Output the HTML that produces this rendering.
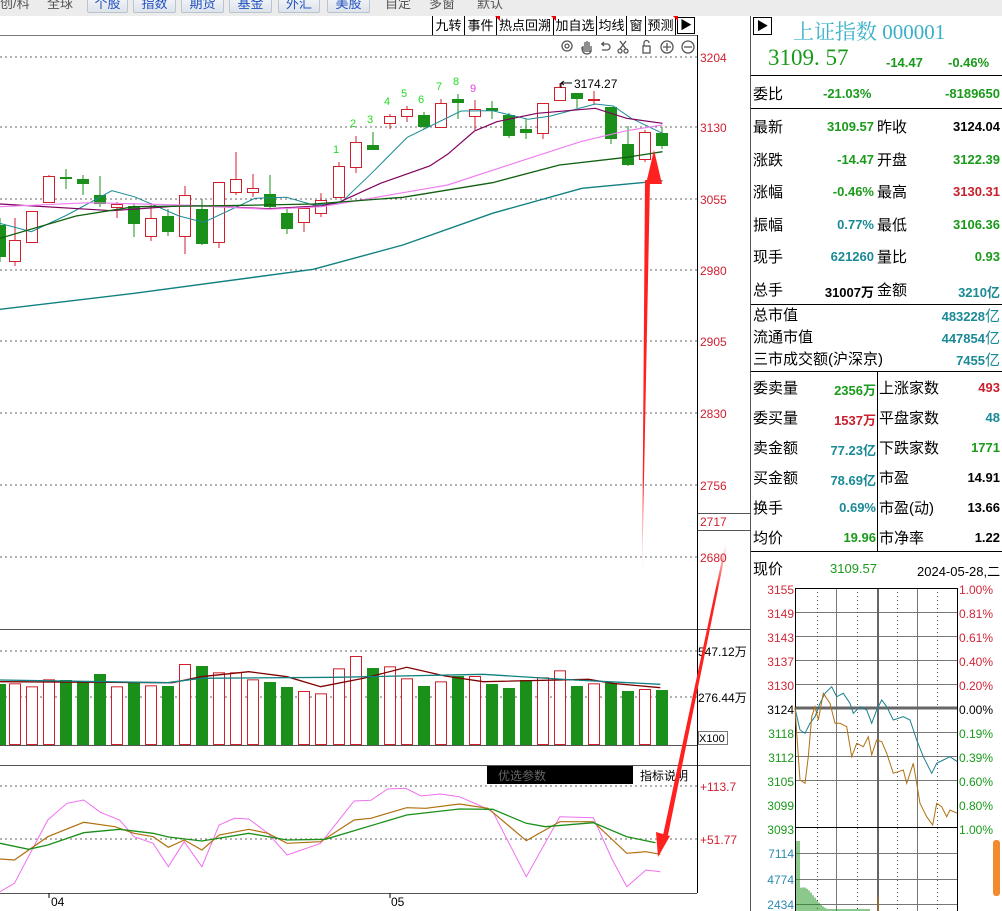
<!DOCTYPE html>
<html><head><meta charset="utf-8"><style>
*{margin:0;padding:0;box-sizing:border-box}
body{width:1002px;height:911px;overflow:hidden;background:#fff;font-family:"Liberation Sans","Noto Sans CJK SC",sans-serif;position:relative}
.a{position:absolute;white-space:nowrap}
.tb{position:absolute;top:0;left:0;width:1002px;height:16px;background:#ececec}
.btn{position:absolute;top:-4px;height:17px;border:1px solid #b8c4d0;border-radius:2px;background:linear-gradient(#f4f6f8,#dde3ea);color:#2050c0;font-size:13px;line-height:14px;text-align:center}
.gt{position:absolute;top:-4px;color:#555;font-size:13px;line-height:16px}
.t2{position:absolute;top:16px;height:19px;border:1px solid #000;border-top:none;border-bottom:none;border-left:none;font-size:13px;line-height:19px;text-align:center;color:#000}
.lbl{font-size:15px;color:#000}
.g{color:#1a9a1a}.r{color:#c8202c}.c{color:#1a8a96}.k{color:#000}
.v{font-size:13px;font-weight:bold;text-align:right}
</style></head><body>
<div class="tb"></div>
<div class="gt" style="left:0">创/科</div>
<div class="gt" style="left:47px">全球</div>
<div class="btn" style="left:87px;width:41px">个股</div>
<div class="btn" style="left:133px;width:43px">指数</div>
<div class="btn" style="left:181px;width:43px">期货</div>
<div class="btn" style="left:229px;width:43px">基金</div>
<div class="btn" style="left:278px;width:42px">外汇</div>
<div class="btn" style="left:327px;width:43px">美股</div>
<div class="gt" style="left:385px">自定</div>
<div class="gt" style="left:429px">多窗</div>
<div class="gt" style="left:477px">默认</div>

<div class="a" style="left:0;top:35px;width:697px;height:1px;background:#777"></div>
<div class="t2" style="left:432px;width:33px;border-left:1px solid #000">九转</div>
<div class="t2" style="left:465px;width:32px">事件</div>
<div class="t2" style="left:497px;width:57px">热点回溯</div>
<div class="t2" style="left:554px;width:43px">加自选</div>
<div class="t2" style="left:597px;width:30px">均线</div>
<div class="t2" style="left:627px;width:19px">窗</div>
<div class="t2" style="left:646px;width:30px">预测</div>
<div class="a" style="left:677px;top:17px;width:18px;height:17px;border:1px solid #000;font-size:12px;line-height:15px;text-align:center">&#9654;</div>
<div class="a" style="left:495px;top:16px;width:0;height:0;border-top:5px solid #e00;border-left:5px solid transparent"></div>
<div class="a" style="left:551px;top:16px;width:0;height:0;border-top:5px solid #e00;border-left:5px solid transparent"></div>
<div class="a" style="left:673px;top:16px;width:0;height:0;border-top:5px solid #e00;border-left:5px solid transparent"></div>

<svg class="a" style="left:0;top:0" width="1002" height="911" id="s">
<g stroke="#555" fill="none" stroke-width="1.3">
<circle cx="567" cy="46" r="5"/><circle cx="567" cy="46" r="2"/>
<path d="M583 52v-6m2 6v-10m2 10v-11m2 11v-10m2 10v-6M582 47c0 5 2 7 5 7s4-2 4-5"/>
<path d="M601 44h6a3 3 0 010 6h-5m0-6l2-2m-2 2l2 2"/>
<path d="M620 41l6 8m0-8l-6 8"/><circle cx="620" cy="51" r="2"/><circle cx="626" cy="51" r="2"/>
<rect x="643" y="46" width="7" height="7"/><path d="M644 46v-3a2.5 2.5 0 015 0"/>
<circle cx="667" cy="47" r="6"/><path d="M663 47h8m-4-4v8"/>
<circle cx="688" cy="47" r="6"/><path d="M684 47h8"/>
</g>
<g stroke="#666" stroke-dasharray="2,3" stroke-width="1">
<path d="M0 57H697M0 127H697M0 199H697M0 270H697M0 341H697M0 413H697M0 485H697M0 557H697"/>
<path d="M0 651H697M0 697H697M0 786H697M0 839H697"/>
</g>
<path d="M697.5 35V893M0 629.5H750M0 745.5H697M0 765.5H750M0 893.5H697M697 513.5H750M697 530.5H750M750.5 16V911" stroke="#555" stroke-width="1" fill="none"/>
<path d="M697.5 35V893" stroke="#000"/>
<path d="M49 893v5M390 893v5" stroke="#000"/>
<g id="cd"></g>
<g font-size="12" fill="#d02030" font-family="Liberation Sans,sans-serif">
<text x="700" y="62">3204</text><text x="700" y="132">3130</text><text x="700" y="204">3055</text><text x="700" y="275">2980</text><text x="700" y="346">2905</text><text x="700" y="418">2830</text><text x="700" y="490">2756</text><text x="700" y="526">2717</text><text x="700" y="562">2680</text>
<text x="700" y="791">+113.7</text><text x="700" y="844">+51.77</text>
</g>
<g font-size="12" fill="#000" font-family="Liberation Sans,Noto Sans CJK SC,sans-serif">
<text x="698" y="656">547.12万</text><text x="698" y="702">276.44万</text>
<text x="51" y="906">04</text><text x="391" y="906">05</text>
<text x="574" y="88">3174.27</text>
</g>
<path d="M572 83h-11m0 0l3-2m-3 2l3 2M561 83v5" stroke="#000" fill="none"/>
<rect x="698.5" y="731.5" width="29" height="13" fill="#fff" stroke="#777"/>
<text x="699" y="742" font-size="11" font-family="Liberation Sans">X100</text>
<rect x="487" y="766" width="146" height="18" fill="#000"/>
<text x="498" y="780" font-size="12" fill="#666" font-family="Liberation Sans,Noto Sans CJK SC,sans-serif">优选参数</text>
<text x="640" y="780" font-size="12" fill="#000" font-family="Liberation Sans,Noto Sans CJK SC,sans-serif">指标说明</text>
<g font-size="11" fill="#22dd22" font-family="Liberation Sans">
<text x="333" y="153">1</text><text x="350" y="127">2</text><text x="367" y="123">3</text><text x="384" y="105">4</text><text x="401" y="97">5</text><text x="418" y="103">6</text><text x="436" y="90">7</text><text x="453" y="85">8</text>
<text x="470" y="92" fill="#e040e0">9</text></g>

<g stroke="#777" stroke-width="1">
<path d="M795 612.5H957M795 636.5H957M795 660.5H957M795 684.5H957M795 732.5H957M795 756.5H957M795 780.5H957M795 853.5H957M795 879.5H957M795 904.5H957"/>
<path d="M836.5 588V911M917.5 588V911"/>
</g>
<path d="M817.5 588V911M857.5 588V911M897.5 588V911M937.5 588V911" stroke="#444" stroke-dasharray="1,3"/>
<path d="M795 708H957" stroke="#666" stroke-width="3"/>
<path d="M878 588V911" stroke="#666" stroke-width="2"/>
<rect x="795.5" y="588.5" width="162" height="239" fill="none" stroke="#000"/>
<path d="M795.5 827V911M957.5 827V911" stroke="#000"/>
<g id="mini"></g>
<g font-size="12" font-family="Liberation Sans">
<g fill="#d02838" text-anchor="end"><text x="794" y="594">3155</text><text x="794" y="618">3149</text><text x="794" y="642">3143</text><text x="794" y="666">3137</text><text x="794" y="690">3130</text></g>
<text x="794" y="714" text-anchor="end">3124</text>
<g fill="#1a9a1a" text-anchor="end"><text x="794" y="738">3118</text><text x="794" y="762">3112</text><text x="794" y="786">3105</text><text x="794" y="810">3099</text><text x="794" y="834">3093</text></g>
<g fill="#2a8ab0" text-anchor="end"><text x="794" y="858">7114</text><text x="794" y="884">4774</text><text x="794" y="909">2434</text></g>
<g fill="#d02838"><text x="959" y="594">1.00%</text><text x="959" y="618">0.81%</text><text x="959" y="642">0.61%</text><text x="959" y="666">0.40%</text><text x="959" y="690">0.20%</text></g>
<text x="959" y="714">0.00%</text>
<g fill="#1a9a1a"><text x="959" y="738">0.19%</text><text x="959" y="762">0.39%</text><text x="959" y="786">0.60%</text><text x="959" y="810">0.80%</text><text x="959" y="834">1.00%</text></g>
</g>
<rect x="993" y="840" width="7" height="56" rx="3" fill="#f28a30"/>
<g id="arr"></g>
</svg>

<div class="a" style="left:753px;top:17px;width:19px;height:18px;border:1px solid #000;font-size:12px;line-height:16px;text-align:center">&#9654;</div>
<div class="a" style="left:793px;top:16px;font-size:21px;color:#3ab0c8;font-family:'Liberation Serif','Noto Serif CJK SC',serif">上证指数 000001</div>
<div class="a g" style="left:768px;top:45px;font-size:23px;font-family:'Liberation Serif',serif">3109. 57</div>
<div class="a g" style="left:886px;top:55px;font-size:13px;font-weight:bold">-14.47</div>
<div class="a g" style="left:948px;top:55px;font-size:13px;font-weight:bold">-0.46%</div>
<div class="a" style="left:751px;top:75px;width:251px;height:1px;background:#000"></div>
<div class="a lbl" style="left:753px;top:83px">委比</div>
<div class="a g v" style="left:823px;top:86px">-21.03%</div>
<div class="a g v" style="left:900px;top:86px;width:100px">-8189650</div>
<div class="a" style="left:751px;top:108px;width:251px;height:1px;background:#000"></div>

<div id="rows"></div>
<div class="a" style="left:751px;top:304px;width:251px;height:1px;background:#000"></div>
<div class="a lbl" style="left:753px;top:306px;line-height:20px">总市值</div><div class="a c v" style="left:900px;top:307px;width:100px;line-height:20px">483228<span style="font-weight:normal;font-size:15px">亿</span></div>
<div class="a lbl" style="left:753px;top:328px;line-height:20px">流通市值</div><div class="a c v" style="left:900px;top:329px;width:100px;line-height:20px">447854<span style="font-weight:normal;font-size:15px">亿</span></div>
<div class="a lbl" style="left:753px;top:350px;line-height:20px">三市成交额(沪深京)</div><div class="a c v" style="left:900px;top:351px;width:100px;line-height:20px">7455<span style="font-weight:normal;font-size:15px">亿</span></div>
<div class="a" style="left:751px;top:371px;width:251px;height:1px;background:#000"></div>
<div class="a" style="left:877px;top:371px;width:1px;height:180px;background:#000"></div>
<div class="a" style="left:751px;top:551px;width:251px;height:1px;background:#000"></div>
<div class="a lbl" style="left:753px;top:558px">现价</div>
<div class="a g" style="left:830px;top:561px;font-size:13px">3109.57</div>
<div class="a k" style="left:917px;top:561px;font-size:13px">2024-05-28,二</div>

<script>
var NS="http://www.w3.org/2000/svg";
function el(p,t,a){var e=document.createElementNS(NS,t);for(var k in a)e.setAttribute(k,a[k]);p.appendChild(e);return e}
var cd=document.getElementById('cd');
var C=[[0,'g',225,257,218,262],[15,'r',240,261,218,266],[32,'r',211,242,211,243],[49,'r',176,202,175,202],[66,'g',177,179,169,189],[83,'g',179,184,175,195],[100,'g',195,204,176,207],[117,'r',204,207,202,218],[134,'g',206,224,204,237],[151,'r',218,236,203,241],[168,'g',216,232,209,236],[185,'r',195,236,186,254],[202,'g',209,244,199,245],[219,'r',182,242,182,248],[236,'r',179,192,152,195],[253,'r',188,192,174,197],[270,'g',194,207,175,209],[287,'g',213,229,207,234],[304,'r',208,222,207,232],[321,'r',200,213,193,217],[339,'r',166,197,162,197],[356,'r',142,167,136,173],[373,'g',145,150,132,150],[390,'r',116,123,114,129],[407,'r',109,116,106,122],[424,'g',115,127,112,129],[441,'r',103,127,99,127],[458,'g',99,103,94,119],[475,'r',109,116,100,130],[492,'g',108,111,101,119],[509,'g',115,136,113,138],[526,'g',129,133,119,139],[543,'r',103,133,103,139],[560,'r',87,100,83,100],[577,'g',93,99,93,108],[594,'r',99,100,91,104],[611,'g',107,139,107,144],[628,'g',144,165,126,166],[645,'r',132,159,130,162],[662,'g',133,146,127,149]];
var V=[192,190,199,178,180,185,162,199,187,196,198,132,138,157,157,178,186,201,213,220,145,108,144,139,175,198,184,168,168,192,204,180,172,151,198,190,189,213,207,210];
function line(pts,sx,oy,col,w,g){var s='';for(var i=0;i<pts.length;i+=2)s+=(i?'L':'M')+(pts[i]/sx).toFixed(1)+' '+(pts[i+1]/3+oy).toFixed(1);el(g||cd,'path',{d:s,stroke:col,'stroke-width':w||1,fill:'none'})}
var G='#1a8f1a',R='#d0202c';
C.forEach(function(c,i){var x=c[0],col=c[1]=='g'?G:R;
 el(cd,'line',{x1:x,x2:x,y1:c[4],y2:c[5],stroke:col});
 if(c[1]=='g')el(cd,'rect',{x:x-6,y:c[2],width:12,height:Math.max(c[3]-c[2],1.5),fill:G});
 else{el(cd,'rect',{x:x-5.5,y:c[2]+.5,width:11,height:Math.max(c[3]-c[2],1),fill:'#fff',stroke:R})}
 var vt=620+V[i]/3;
 if(c[1]=='g')el(cd,'rect',{x:x-6,y:vt,width:12,height:745-vt,fill:G});
 else el(cd,'rect',{x:x-5.5,y:vt+.5,width:11,height:745-vt-1,fill:'#fff',stroke:R});
});
var z=2.234;
line([0,490,70,515,150,465,250,392,300,410,400,468,455,487,570,415,640,412,700,435,760,430,830,340,910,232,1030,153,1100,152,1180,178,1230,168,1330,132,1370,138,1410,175,1480,220],z,60,'#1a8a96');
line([0,432,250,452,420,436,600,446,720,437,760,425,850,370,960,318,1000,283,1060,213,1110,185,1200,160,1330,145,1400,175,1480,190],z,60,'#800060',1.2);
line([0,440,200,428,400,435,600,448,720,440,900,398,1000,375,1200,287,1300,244,1400,212,1480,195],z,60,'#f080f0',1.2);
line([0,535,170,468,300,440,500,437,700,432,900,412,1100,368,1250,315,1400,292,1480,275],z,60,'#106010',1.3);
line([0,748,300,700,700,628,900,555,1100,460,1300,385,1480,362],z,60,'#108080',1.4);
var z2=2.09;
line([0,185,360,188,420,170,520,155,600,170,670,200,760,175,850,142,930,168,1010,185,1230,178,1280,190,1380,203],z2,620,'#800000',1.3);
line([0,180,350,188,420,175,700,172,1010,163,1200,180,1380,193],z2,620,'#108080',1.3);
line([0,815,30,790,100,600,140,550,175,540,210,577,250,600,280,650,320,670,352,740,385,665,422,740,458,615,490,595,520,597,560,640,600,705,670,670,740,543,775,541,810,507,848,505,880,528,920,522,960,530,1000,555,1030,575,1100,770,1170,590,1240,593,1280,720,1310,800,1350,750,1380,755],z2,620,'#f070f0');
line([0,717,30,720,100,650,175,607,240,620,280,640,320,650,352,682,385,660,422,690,458,645,520,628,560,640,600,670,670,665,740,600,775,595,850,563,890,565,960,552,1020,565,1100,662,1170,605,1240,605,1310,700,1350,695,1380,703],z2,620,'#b07010',1.2);
line([0,670,60,688,100,675,175,638,250,628,320,640,352,651,422,663,520,640,600,660,680,658,850,585,960,567,1030,568,1100,610,1140,620,1240,608,1310,650,1370,668],z2,620,'#1a8f1a',1.3);
var mini=document.getElementById('mini');
function ml(p,col){var s='';for(var i=0;i<p.length;i+=2)s+=(i?'L':'M')+(p[i]/3+750).toFixed(1)+' '+(p[i+1]/3+550).toFixed(1);el(mini,'path',{d:s,stroke:col,fill:'none'})}
ml([135,475,150,540,165,550,180,520,195,500,210,460,225,430,245,410,260,440,280,430,300,460,310,490,330,470,350,480,365,520,380,480,395,450,410,470,430,510,460,500,480,510,500,570,520,620,545,670,560,640,580,630,600,620,622,635],'#1a8090');
ml([135,470,140,550,150,690,165,700,175,620,185,500,195,470,205,510,220,430,240,460,255,520,270,520,290,530,305,620,320,580,340,590,355,560,365,615,380,570,395,575,410,610,430,670,460,660,470,700,490,640,500,700,510,760,530,800,548,825,560,760,575,770,590,800,600,780,622,790],'#b07010');
for(var x=797;x<870;x+=2){var h=x<800?70:Math.max(2,40*Math.exp(-(x-797)/18)*(0.6+0.4*Math.sin(x*3)));el(mini,'line',{x1:x,x2:x,y1:911-h,y2:911,stroke:(x%4?'#1a8f1a':'#b07010')})}
el(mini,'line',{x1:878,x2:878,y1:897,y2:911,stroke:'#b07010'});
var ar=document.getElementById('arr');
el(ar,'defs',{}).innerHTML='<linearGradient id="f1" x1="0" y1="1" x2="0" y2="0"><stop offset="0" stop-color="#ff2020" stop-opacity="0"/><stop offset="0.25" stop-color="#ff2020"/></linearGradient><linearGradient id="f2" x1="0" y1="0" x2="0" y2="1"><stop offset="0" stop-color="#ff2020" stop-opacity="0"/><stop offset="0.15" stop-color="#ff2020"/></linearGradient>';
el(ar,'path',{d:'M642 580L645 180L650 180Z',fill:'url(#f1)'});
el(ar,'path',{d:'M654 150L646 184L662 184Z',fill:'#ff2020'});
el(ar,'path',{d:'M725 545L662 840L667 840L727 545Z',fill:'url(#f2)'});
el(ar,'path',{d:'M658 857L656 832L670 836Z',fill:'#ff2020'});
var rows=document.getElementById('rows'),h='';
var A=[['最新','3109.57','g','昨收','3124.04','k'],['涨跌','-14.47','g','开盘','3122.39','g'],['涨幅','-0.46%','g','最高','3130.31','r'],['振幅','0.77%','c','最低','3106.36','g'],['现手','621260','c','量比','0.93','g'],['总手','31007万','k','金额','3210亿','c']];
A.forEach(function(r,i){var y=116+i*32.6;h+='<div class="a lbl" style="left:753px;top:'+y+'px">'+r[0]+'</div><div class="a v '+r[2]+'" style="left:780px;width:94px;top:'+(y+3)+'px">'+r[1]+'</div><div class="a lbl" style="left:877px;top:'+y+'px">'+r[3]+'</div><div class="a v '+r[5]+'" style="left:900px;width:100px;top:'+(y+3)+'px">'+r[4]+'</div>'});
var B=[['委卖量','2356万','g','上涨家数','493','r'],['委买量','1537万','r','平盘家数','48','c'],['卖金额','77.23亿','c','下跌家数','1771','g'],['买金额','78.69亿','c','市盈','14.91','k'],['换手','0.69%','c','市盈(动)','13.66','k'],['均价','19.96','g','市净率','1.22','k']];
B.forEach(function(r,i){var y=377+i*30;h+='<div class="a lbl" style="left:753px;top:'+y+'px">'+r[0]+'</div><div class="a v '+r[2]+'" style="left:800px;width:76px;top:'+(y+3)+'px">'+r[1]+'</div><div class="a lbl" style="left:879px;top:'+y+'px">'+r[3]+'</div><div class="a v '+r[5]+'" style="left:920px;width:80px;top:'+(y+3)+'px">'+r[4]+'</div>'});
rows.innerHTML=h;
</script>
</body></html>
